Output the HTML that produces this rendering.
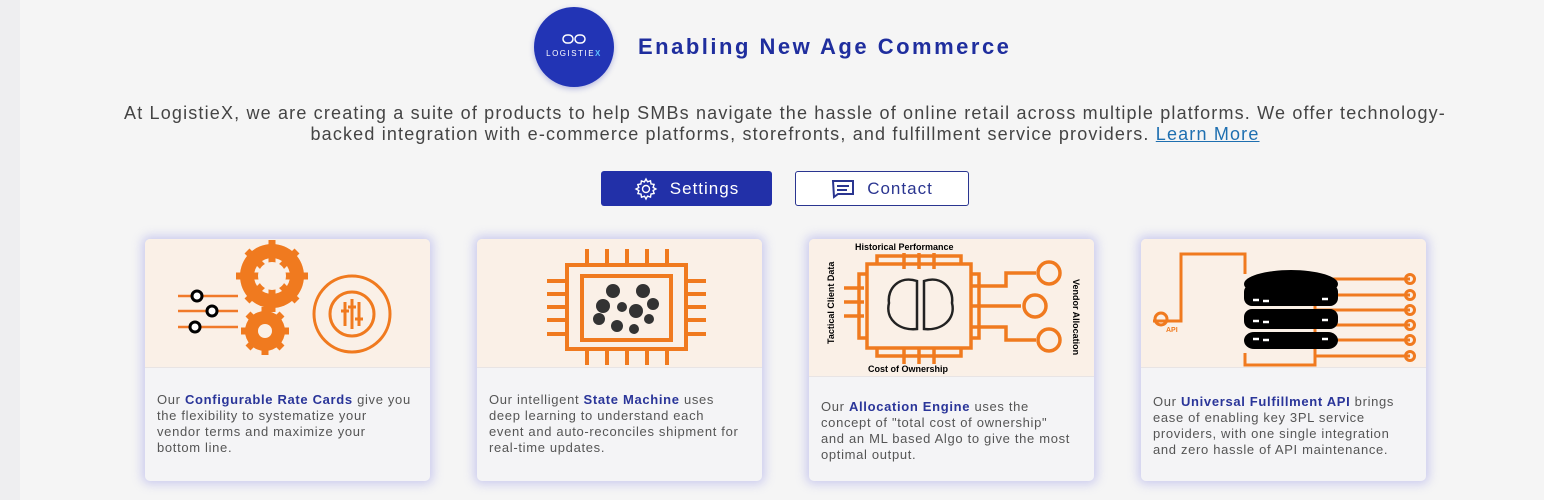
<!DOCTYPE html>
<html><head><meta charset="utf-8"><style>
*{margin:0;padding:0;box-sizing:border-box}
body{width:1544px;height:500px;background:#f5f5f5;font-family:"Liberation Sans",sans-serif;position:relative;overflow:hidden}
.strip{position:absolute;left:0;top:0;width:20px;height:500px;background:#eeeef0}
.logo{position:absolute;left:534px;top:7px;width:80px;height:80px;border-radius:50%;background:#2234b5;box-shadow:0 2px 6px rgba(40,50,180,.3);color:#fff;text-align:center}
.logo .t{position:absolute;top:42px;left:0;width:80px;font-size:8px;letter-spacing:1.5px}
.title{position:absolute;left:638px;top:34px;font-size:22px;font-weight:bold;color:#1f2e9e;letter-spacing:2.5px}
.para{position:absolute;left:0;width:1570px;top:103px;text-align:center;font-size:18px;line-height:21px;color:#444;letter-spacing:1.17px;white-space:nowrap}
.para a{color:#1e6fb0;text-decoration:underline}
.btn{position:absolute;top:171px;height:35px;border-radius:3px;font-size:17px;display:flex;align-items:center;justify-content:center;gap:12px;letter-spacing:1px}
.b1{left:601px;width:171px;background:#2230a8;color:#fff}
.b2{left:795px;width:174px;border:1.5px solid #2a3590;background:#fff;color:#2a3590}
.card{position:absolute;top:239px;width:285px;height:242px;border-radius:5px;background:#f4f4f6;box-shadow:0 0 10px 3px rgba(150,150,230,.45);overflow:hidden}
.img{height:129px;background:#faf0e7;border-bottom:1px solid #e8e4e4;position:relative}
.txt{position:absolute;left:12px;width:290px;font-size:13px;line-height:16px;color:#555;letter-spacing:.67px;white-space:nowrap}
.txt b{color:#2a3599}
</style></head><body>
<div class="strip"></div>
<div class="logo"><svg style="position:absolute;left:28px;top:27px" width="24" height="10" viewBox="0 0 24 10"><rect x="1" y="1" width="10" height="8" rx="4" fill="none" stroke="#fff" stroke-width="1.5"/><rect x="13" y="1" width="10" height="8" rx="4" fill="none" stroke="#fff" stroke-width="1.5"/></svg><div class="t">LOGISTIE<span style="color:#5bc0ff;font-weight:bold">X</span></div></div>
<div class="title">Enabling New Age Commerce</div>
<div class="para">At LogistieX, we are creating a suite of products to help SMBs navigate the hassle of online retail across multiple platforms. We offer technology-<br>backed integration with e-commerce platforms, storefronts, and fulfillment service providers. <a>Learn More</a></div>
<div class="btn b1"><svg width="24" height="24" viewBox="0 0 24 24" fill="none" stroke="#fff" stroke-width="1.4"><circle cx="12" cy="12" r="3.5"/><path d="M12 2l1.5 2.8 3-1 .5 3.1 3.1.5-1 3 2.8 1.6-2.8 1.5 1 3-3.1.5-.5 3.1-3-1L12 22l-1.5-2.8-3 1-.5-3.1-3.1-.5 1-3L2 12l2.8-1.5-1-3 3.1-.5.5-3.1 3 1z"/></svg>Settings</div>
<div class="btn b2"><svg width="24" height="20" viewBox="0 0 24 20" fill="none" stroke="#2a3590" stroke-width="2"><path d="M2 2h20v13H7l-4 3z"/><path d="M6 7h12M6 11h10"/></svg>Contact</div>

<div class="card" style="left:145px"><div class="img"><svg width="285" height="129" viewBox="0 0 285 129">
<g stroke="#f07a2a" stroke-width="2.5"><path d="M33 57h60M33 72h60M33 88h60"/></g>
<g fill="#fff" stroke="#000" stroke-width="3"><circle cx="52" cy="57" r="5"/><circle cx="67" cy="72" r="5"/><circle cx="50" cy="88" r="5"/></g>
<g fill="#f07a1f"><circle cx="127" cy="37" r="32"/><circle cx="120" cy="92" r="20"/></g>
<circle cx="127" cy="37" r="18" fill="#faf0e7"/><circle cx="120" cy="92" r="9" fill="#faf0e7"/>
<g stroke="#f07a1f" stroke-width="7"><path d="M127 1v72M91 37h72M102 12l50 50M152 12l-50 50M120 68v48M96 92h48M103 75l34 34M137 75l-34 34"/></g>
<circle cx="127" cy="37" r="14" fill="#faf0e7"/><circle cx="120" cy="92" r="7" fill="#faf0e7"/>
<g fill="none" stroke="#f07a1f" stroke-width="3"><circle cx="207" cy="75" r="38"/><circle cx="207" cy="75" r="22"/><path d="M200 63v24M207 60v30M214 63v24M196 72h8M203 68h8M210 80h8"/></g>
</svg></div><div class="txt" style="top:153px">Our <b>Configurable Rate Cards</b> give you<br>the flexibility to systematize your<br>vendor terms and maximize your<br>bottom line.</div></div>

<div class="card" style="left:477px"><div class="img"><svg width="285" height="129" viewBox="0 0 285 129">
<g fill="none" stroke="#f07a1f" stroke-width="4"><rect x="90" y="26" width="119" height="84"/><rect x="105" y="37" width="89" height="64"/>
<path d="M110 26V10M130 26V10M150 26V10M170 26V10M190 26V10M110 110v16M130 110v16M150 110v16M170 110v16M190 110v16M90 42H70M90 55H70M90 68H70M90 81H70M90 95H70M209 42h20M209 55h20M209 68h20M209 81h20M209 95h20"/></g>
<g fill="#333"><circle cx="136" cy="52" r="7"/><circle cx="166" cy="52" r="7"/><circle cx="126" cy="67" r="7"/><circle cx="159" cy="72" r="7"/><circle cx="176" cy="65" r="6"/><circle cx="122" cy="80" r="6"/><circle cx="140" cy="87" r="6"/><circle cx="157" cy="90" r="5"/><circle cx="145" cy="68" r="5"/><circle cx="172" cy="80" r="5"/></g>
</svg></div><div class="txt" style="top:153px">Our intelligent <b>State Machine</b> uses<br>deep learning to understand each<br>event and auto-reconciles shipment for<br>real-time updates.</div></div>

<div class="card" style="left:809px"><div class="img" style="height:138px"><svg width="285" height="138" viewBox="0 0 285 138">
<text x="46" y="11" font-size="9" font-weight="bold" font-family="Liberation Sans">Historical Performance</text>
<text x="59" y="133" font-size="9" font-weight="bold" font-family="Liberation Sans">Cost of Ownership</text>
<text transform="translate(25,105) rotate(-90)" font-size="9" font-weight="bold" font-family="Liberation Sans">Tactical Client Data</text>
<text transform="translate(264,40) rotate(90)" font-size="9" font-weight="bold" font-family="Liberation Sans">Vendor Allocation</text>
<g fill="none" stroke="#f07a1f" stroke-width="3.5"><rect x="58" y="25" width="104" height="84"/><path d="M58 35h-8v64h8M162 35h8v64h-8M68 25v-8h84v8M68 109v8h84v-8"/>
<path d="M95 14v16M110 14v16M125 14v16M95 125v-16M110 125v-16M125 125v-16M35 49h20M35 63h20M35 77h20M162 47h35v-13h30M162 67h50M162 88h35v13h30"/>
<circle cx="240" cy="34" r="11"/><circle cx="226" cy="67" r="11"/><circle cx="240" cy="101" r="11"/></g>
<g fill="none" stroke="#222" stroke-width="2.5"><path d="M108 42c-18-6-30 8-28 22-4 16 10 28 28 26z"/><path d="M115 42c18-6 30 8 28 22 4 16-10 28-28 26z"/></g>
</svg></div><div class="txt" style="top:160px">Our <b>Allocation Engine</b> uses the<br>concept of "total cost of ownership"<br>and an ML based Algo to give the most<br>optimal output.</div></div>

<div class="card" style="left:1141px"><div class="img"><svg width="285" height="129" viewBox="0 0 285 129">
<g fill="none" stroke="#f07a1f" stroke-width="3"><path d="M12 82h28V15h64v20M104 114v12h70V40M174 40h95M174 56h95M174 71h95M174 86h95M174 101h95M174 117h95"/>
<circle cx="269" cy="40" r="4.5"/><circle cx="269" cy="56" r="4.5"/><circle cx="269" cy="71" r="4.5"/><circle cx="269" cy="86" r="4.5"/><circle cx="269" cy="101" r="4.5"/><circle cx="269" cy="117" r="4.5"/><circle cx="20" cy="80" r="6"/></g>
<text x="25" y="93" font-size="7" font-weight="bold" fill="#f07a1f" font-family="Liberation Sans">API</text>
<g fill="#000"><ellipse cx="150" cy="45" rx="47" ry="14"/><rect x="103" y="45" width="94" height="22" rx="8"/><rect x="103" y="70" width="94" height="20" rx="8"/><rect x="103" y="93" width="94" height="17" rx="10"/></g>
<g stroke="#fff" stroke-width="2.5"><path d="M112 61h6M122 62h6M181 60h6M112 82h6M122 83h6M181 81h6M112 100h6M122 101h6M181 100h6"/></g>
</svg></div><div class="txt" style="top:155px">Our <b>Universal Fulfillment API</b> brings<br>ease of enabling key 3PL service<br>providers, with one single integration<br>and zero hassle of API maintenance.</div></div>
</body></html>
